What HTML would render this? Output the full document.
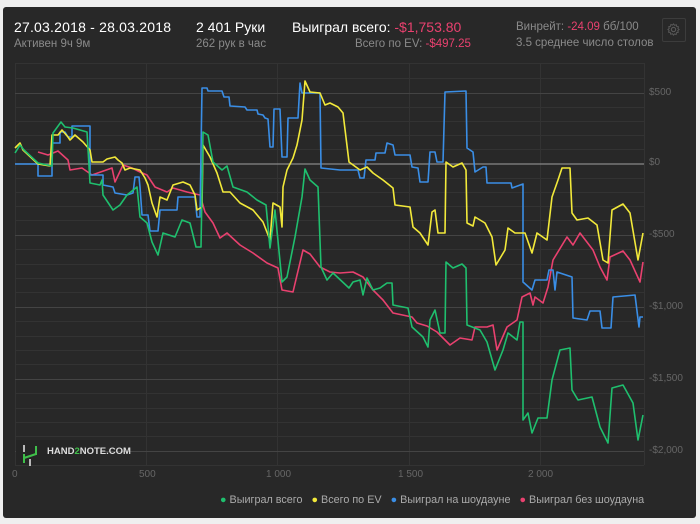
<!DOCTYPE html>
<html><head><meta charset="utf-8"><style>
body{margin:0;width:700px;height:524px;background:#efefef;font-family:"Liberation Sans",sans-serif;overflow:hidden;position:relative}
.panel{position:absolute;left:3px;top:7px;width:693px;height:511px;background:#282828;border-radius:3px}
.t{position:absolute;white-space:nowrap}
.w{color:#fff;font-size:14px}
.g{color:#8a8a8a;font-size:11.5px}
.r{color:#e9416f}
.ax{position:absolute;color:#666;font-size:10px}
</style></head><body>
<div class="panel"></div>
<div class="t w" style="left:14px;top:19px;letter-spacing:0.2px">27.03.2018 - 28.03.2018</div>
<div class="t g" style="left:14px;top:38px">Активен 9ч 9м</div>
<div class="t w" style="left:196px;top:19px">2 401 Руки</div>
<div class="t g" style="left:196px;top:38px">262 рук в час</div>
<div class="t w" style="left:292px;top:19px">Выиграл всего: <span class="r">-$1,753.80</span></div>
<div class="t g" style="left:355px;top:38px">Всего по EV: <span class="r">-$497.25</span></div>
<div class="t g" style="left:516px;top:21px">Винрейт: <span class="r">-24.09</span> бб/100</div>
<div class="t g" style="left:516px;top:37px">3.5 среднее число столов</div>
<div style="position:absolute;left:662px;top:18px;width:22px;height:22px;border:1px solid #3c3c3c;border-radius:2px"></div>
<svg style="position:absolute;left:666px;top:22px" width="15" height="15" viewBox="0 0 16 16"><circle cx="8" cy="8" r="2.3" fill="none" stroke="#5a5a5a" stroke-width="1.2"/><path d="M8 2l1.2 1.5 1.8-.6.4 1.9 1.9.4-.6 1.8L14 8l-1.5 1.2.6 1.8-1.9.4-.4 1.9-1.8-.6L8 14l-1.2-1.5-1.8.6-.4-1.9-1.9-.4.6-1.8L2 8l1.5-1.2-.6-1.8 1.9-.4.4-1.9 1.8.6z" fill="none" stroke="#5a5a5a" stroke-width="1"/></svg>
<svg style="position:absolute;left:0;top:0" width="700" height="524">
<g stroke="#333" stroke-width="1">
<path d="M15 78.5H644M15 107.5H644M15 121.5H644M15 135.5H644M15 149.5H644M15 178.5H644M15 192.5H644M15 206.5H644M15 220.5H644M15 249.5H644M15 264.5H644M15 278.5H644M15 292.5H644M15 321.5H644M15 336.5H644M15 350.5H644M15 364.5H644M15 393.5H644M15 408.5H644M15 422.5H644M15 436.5H644"/>
<path d="M15.5 63V465M146.5 63V465M277.5 63V465M409.5 63V465M540.5 63V465M644.5 63V465M15 63.5H644M15 465.5H644"/>
</g>
<g stroke="#444" stroke-width="1"><path d="M15 93.5H644M15 235.5H644M15 307.5H644M15 379.5H644M15 451.5H644"/></g>
<path d="M15 164H644" stroke="#888" stroke-width="1.2"/>
<g fill="none" stroke-width="1.6" stroke-linejoin="round">
<polyline stroke="#e9416f" points="38,152 48,155 58,151 68,160 70,170 82,168 92,175 112,168 115,182 123,165 132,168 140,172 147,175 155,187 167,192 173,188 187,192 200,195 205,212 213,223 220,238 227,233 240,245 253,253 267,263 278,268 282,290 293,292 303,250 310,254 320,267 330,272 340,273 353,272 363,277 373,290 383,300 393,313 412,317 417,323 427,326 437,332 450,345 460,338 472,340 475,327 487,327 493,325 497,350 507,327 517,320 522,297 530,293 533,305 535,297 543,303 548,287 553,260 567,237 573,245 580,233 593,250 600,267 607,280 610,257 623,251 630,260 640,282 643,262"/>
<polyline stroke="#3a8ee6" points="15,164 38,164 38,176 52,176 52,143 60,143 60,132 65,132 68,137 72,137 72,126 90,126 90,175 103,175 103,185 113,187 115,193 127,195 133,193 135,177 139,177 140,187 142,215 148,215 150,231 158,231 160,210 177,210 178,197 195,197 197,217 200,217 202,88 207,88 208,91 222,91 224,97 229,97 230,106 245,107 247,110 257,110 258,114 263,115 265,118 268,119 270,147 273,147 274,109 280,109 282,157 287,157 288,118 298,118 300,83 302,93 320,93 321,168 340,170 358,170 360,178 364,178 366,160 375,160 376,153 385,153 387,143 393,145 395,155 410,155 412,167 418,168 420,182 428,182 430,152 435,152 437,162 443,162 445,92 466,91 467,148 473,152 475,172 483,167 486,167 487,183 511,183 512,188 523,184 523,282 532,290 535,280 547,280 549,270 553,270 555,290 557,272 572,277 573,318 587,320 590,311 600,311 602,328 611,328 613,297 635,295 639,327 640,317 643,317"/>
<polyline stroke="#f2e93a" points="15,148 20,143 23,150 38,164 50,166 52,135 58,135 62,130 68,137 70,140 75,135 83,142 90,150 92,162 103,162 107,159 115,157 118,160 122,163 125,170 130,168 140,170 145,178 148,185 152,203 157,217 160,197 167,200 173,185 183,182 190,185 195,195 197,210 202,207 203,145 210,157 217,173 223,192 230,192 240,203 253,210 263,222 270,240 273,203 280,207 282,227 283,187 287,170 293,158 297,145 302,120 305,81 310,92 320,93 325,105 330,103 338,107 343,113 349,162 360,170 367,167 373,173 383,180 393,188 395,205 410,207 413,227 420,233 428,245 432,212 435,210 438,233 445,233 446,162 453,167 462,163 466,170 467,223 473,226 475,217 485,223 492,237 496,265 505,250 508,228 515,233 522,233 525,233 532,253 537,233 547,240 552,197 558,180 562,168 570,168 572,213 577,220 588,218 597,225 603,260 608,263 612,210 623,204 630,213 638,260 643,233"/>
<polyline stroke="#1fbf6e" points="15,153 20,145 24,150 38,163 52,166 53,133 61,122 65,127 73,128 87,132 90,183 100,185 102,180 103,195 113,210 120,205 127,195 137,187 140,217 147,223 152,242 158,255 163,233 175,237 182,220 190,223 196,247 201,247 203,132 208,135 213,162 222,170 227,166 233,187 247,192 257,200 266,205 270,248 275,210 282,282 287,277 295,237 302,197 305,169 310,180 318,187 321,267 327,280 333,273 349,288 353,282 360,280 363,295 367,278 373,290 380,288 387,283 392,283 393,305 408,308 412,327 423,337 428,347 430,320 435,310 440,333 445,333 446,262 453,268 462,264 466,268 467,325 480,330 487,342 495,370 503,350 508,333 517,340 520,322 523,322 523,420 528,413 532,433 538,418 547,418 552,380 560,350 570,348 572,390 578,400 592,397 600,427 608,443 612,388 623,385 633,403 638,440 643,415"/>
</g>
<rect x="16" y="440" width="84" height="25" fill="#252525"/>
<path d="M24 445v7M30 459v7" stroke="#ddd" stroke-width="1.6"/>
<path d="M24 454v9M24 458l12-4M36 446v9" stroke="#3fbf4a" stroke-width="2" fill="none"/>
</svg>
<div class="t" style="left:47px;top:446px;font-size:9.5px;font-weight:bold;color:#ddd">HAND<span style="color:#3fbf4a">2</span>NOTE.COM</div>
<div class="ax" style="left:12px;top:469px">0</div>
<div class="ax" style="left:139px;top:469px">500</div>
<div class="ax" style="left:266px;top:469px">1 000</div>
<div class="ax" style="left:398px;top:469px">1 500</div>
<div class="ax" style="left:528px;top:469px">2 000</div>
<div class="ax" style="left:649px;top:87px">$500</div>
<div class="ax" style="left:649px;top:157px">$0</div>
<div class="ax" style="left:649px;top:229px">-$500</div>
<div class="ax" style="left:649px;top:301px">-$1,000</div>
<div class="ax" style="left:649px;top:373px">-$1,500</div>
<div class="ax" style="left:649px;top:445px">-$2,000</div>
<div class="t" style="left:220px;top:494px;font-size:10.8px;color:#aaa">
<span style="color:#1fbf6e">●</span> Выиграл всего &nbsp;&nbsp;<span style="color:#f2e93a">●</span> Всего по EV &nbsp;&nbsp;<span style="color:#3a8ee6">●</span> Выиграл на шоудауне &nbsp;&nbsp;<span style="color:#e9416f">●</span> Выиграл без шоудауна</div>
</body></html>
